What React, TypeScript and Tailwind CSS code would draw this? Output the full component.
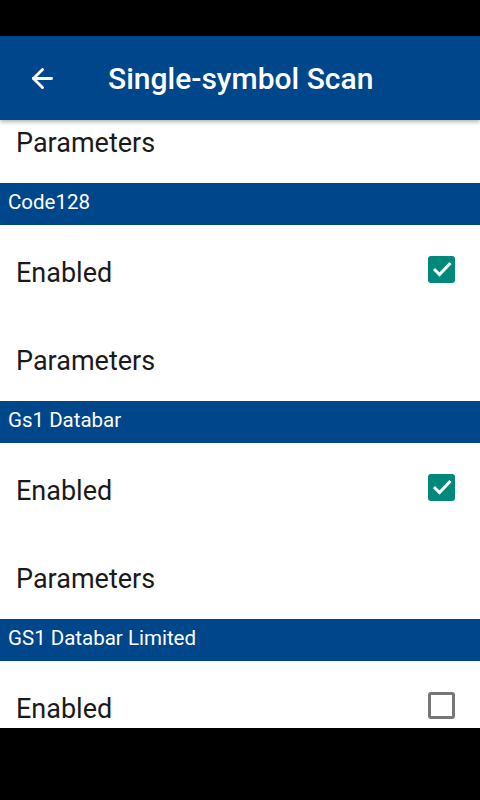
import { ArrowLeft } from "lucide-react";

function Header({ title }: { title: string }) {
  return (
    <div className="flex h-[42px] items-center bg-[#00468b] px-2 pb-1 text-[20.5px] text-white">
      {title}
    </div>
  );
}

function Row({ label, checked }: { label: string; checked?: boolean }) {
  return (
    <div className="flex h-[88px] items-center justify-between bg-white pl-4 pr-[25px] text-[27px] text-[#1a1a1a]">
      <span className="pt-2">{label}</span>
      {checked === true && (
        <div className="flex h-[27px] w-[27px] items-center justify-center rounded-[3px] bg-[#00897b]">
          <svg width="24" height="24" viewBox="0 0 24 24" fill="none" stroke="white" strokeWidth="3">
            <path d="M4 12l5.5 5.5L20.5 6" />
          </svg>
        </div>
      )}
      {checked === false && (
        <div className="h-[27px] w-[27px] rounded-[3px] border-[3px] border-[#777]" />
      )}
    </div>
  );
}

export default function App() {
  return (
    <div className="flex h-[800px] w-[480px] flex-col bg-black font-['Roboto',sans-serif]">
      <div className="h-[36px] shrink-0" />
      <div className="relative z-10 flex h-[84px] shrink-0 items-center bg-[#00468b] shadow-[0_2px_4px_rgba(0,0,0,0.3)]">
        <ArrowLeft className="ml-[27px] text-white" size={31} strokeWidth={2.2} />
        <span className="ml-[50px] text-[30px] font-medium text-white">Single-symbol Scan</span>
      </div>
      <div className="h-[608px] shrink-0 overflow-hidden bg-white">
        <div className="-mt-[25px]">
          <Row label="Parameters" />
          <Header title="Code128" />
          <Row label="Enabled" checked={true} />
          <Row label="Parameters" />
          <Header title="Gs1 Databar" />
          <Row label="Enabled" checked={true} />
          <Row label="Parameters" />
          <Header title="GS1 Databar Limited" />
          <Row label="Enabled" checked={false} />
        </div>
      </div>
      <div className="flex-1" />
    </div>
  );
}
